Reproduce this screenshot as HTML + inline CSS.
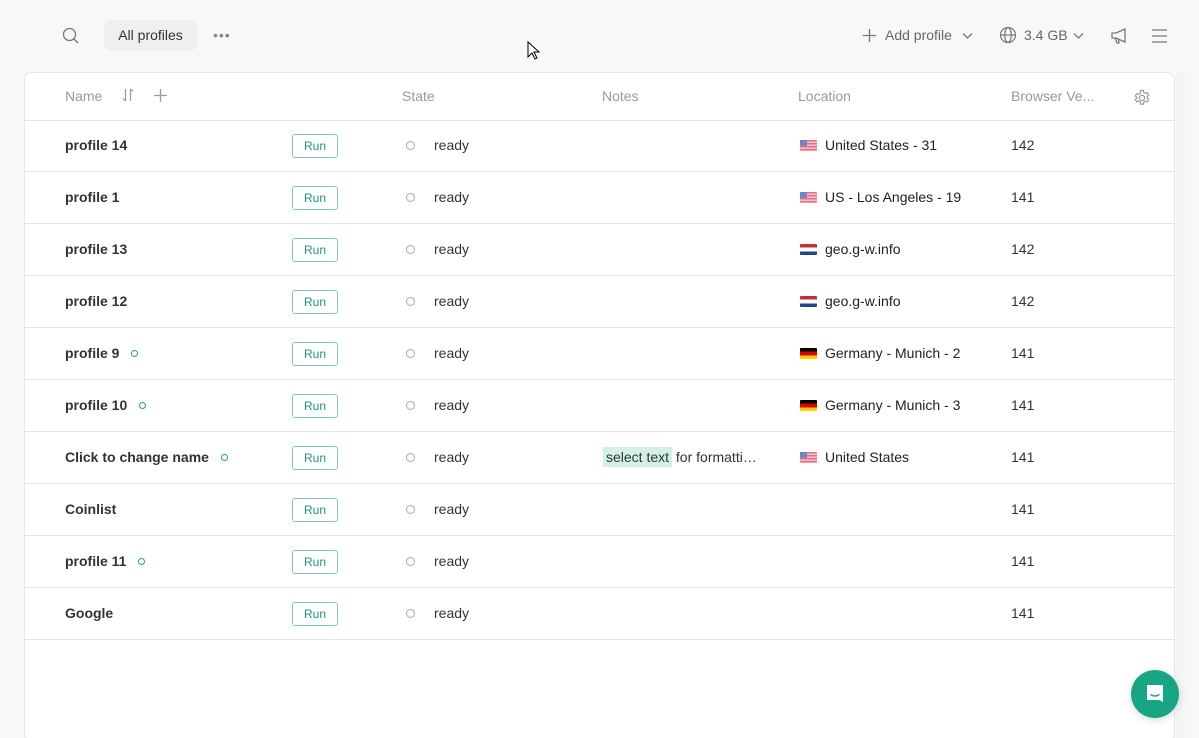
<!DOCTYPE html>
<html><head><meta charset="utf-8"><style>
*{box-sizing:border-box;margin:0;padding:0}
html,body{width:1199px;height:738px;overflow:hidden}
body{background:#f8f8f8;font-family:"Liberation Sans",sans-serif;position:relative;color:#222}
.ab{position:absolute}
.pill{left:104px;top:20px;width:93px;height:31px;background:#efefef;border-radius:8px;font-size:14px;color:#333;line-height:31px;text-align:center}
.tb{font-size:14px;color:#666;top:27px}
.card{position:absolute;left:24px;top:72px;width:1151px;height:670px;background:#fff;border:1px solid #e6e6e6;border-radius:8px}
.hd{position:absolute;top:0;left:0;right:0;height:48px;border-bottom:1px solid #e4e4e4;font-size:14px;color:#999}
.hd span{position:absolute;top:15px}
.row{position:absolute;left:0;right:0;height:52px;border-bottom:1px solid #e4e4e4;font-size:14px}
.row>*{position:absolute}
.nm{left:40px;top:17px;font-weight:bold;color:#333}
.nm i{display:inline-block;width:7px;height:7px;border:1.3px solid #1fa386;border-radius:50%;margin-left:12px;vertical-align:1px}
.run{left:267px;top:14px;width:46px;height:24px;border:1px solid #7fcdb8;border-radius:3px;color:#1a9a7a;font-size:12px;text-align:center;line-height:22px}
.dot{left:381px;top:21px;width:9px;height:9px;border:1px solid #aaa;border-radius:50%}
.st{left:409px;top:17px;color:#333}
.loc{left:775px;top:17px;color:#222}
.loc b{display:inline-block;width:17px;height:11px;margin-right:8px;vertical-align:-1px;border-radius:1px}
.us{background:repeating-linear-gradient(#e8706e 0 1.5px,#fbe 1.5px 3px);position:relative}
.us:before{content:"";position:absolute;left:0;top:0;width:7px;height:6px;background:#6f86c4}
.nl{background:linear-gradient(#c0313a 0 33%,#fff 33% 66%,#21468b 66%)}
.de{background:linear-gradient(#000 0 33%,#dd0000 33% 66%,#ffce00 66%)}
.bv{left:986px;top:17px;color:#333}
</style></head><body>
<svg class="ab" style="left:62px;top:27px" width="18" height="18" viewBox="0 0 18 18" fill="none" stroke="#777" stroke-width="1.3"><circle cx="7.5" cy="7.5" r="6"/><path d="M12 12l4 4"/></svg>
<div class="ab pill">All profiles</div>
<div class="ab" style="left:213px;top:27px;color:#888;font-size:14px;letter-spacing:1px">•••</div>
<svg class="ab" style="left:527px;top:41px" width="14" height="21" viewBox="0 0 14 21"><path d="M1 1v15l4-4 3 6 2-1-3-6h5z" fill="#fff" stroke="#000"/></svg>
<svg class="ab" style="left:862px;top:28px" width="15" height="15" stroke="#777" stroke-width="1.3"><path d="M7.5 1v13M1 7.5h13"/></svg>
<div class="ab tb" style="left:885px">Add profile</div>
<svg class="ab" style="left:962px;top:32px" width="11" height="8" fill="none" stroke="#777" stroke-width="1.3"><path d="M1 1.5l4.5 4.5 4.5-4.5"/></svg>
<svg class="ab" style="left:999px;top:26px" width="18" height="18" fill="none" stroke="#777" stroke-width="1.2"><circle cx="9" cy="9" r="7.5"/><ellipse cx="9" cy="9" rx="3.3" ry="7.5"/><path d="M1.5 9h15"/></svg>
<div class="ab tb" style="left:1024px">3.4 GB</div>
<svg class="ab" style="left:1073px;top:32px" width="11" height="8" fill="none" stroke="#777" stroke-width="1.3"><path d="M1 1.5l4.5 4.5 4.5-4.5"/></svg>
<svg class="ab" style="left:1110px;top:27px" width="18" height="18" fill="none" stroke="#777" stroke-width="1.3"><path d="M2 6h4l9-4v13l-9-4H2zM5 11l2 5h2l-1-5"/></svg>
<svg class="ab" style="left:1151px;top:28px" width="17" height="16" stroke="#777" stroke-width="1.3"><path d="M1 2h15M1 8h15M1 14h15"/></svg>
<div class="ab" style="left:1176px;top:72px;width:23px;height:666px;background:linear-gradient(90deg,#f3f3f3,#fafafa)"></div>
<div class="card">
<div class="hd"><span style="left:40px">Name</span>
<svg class="ab" style="left:97px;top:15px" width="12" height="14" stroke="#999" stroke-width="1.2" fill="none"><path d="M3.5 1v12M1 10.5l2.5 2.5M8.5 13V1M11 3.5L8.5 1"/></svg>
<svg class="ab" style="left:128px;top:15px" width="15" height="15" stroke="#999" stroke-width="1.3"><path d="M7.5 1v13M1 7.5h13"/></svg>
<span style="left:377px">State</span><span style="left:577px">Notes</span><span style="left:773px">Location</span><span style="left:986px">Browser Ve...</span>
<svg class="ab" style="left:1108px;top:16px" width="18" height="18" fill="none" stroke="#999" stroke-width="1.2"><circle cx="9" cy="9" r="2.6"/><path d="M7.6 1.5h2.8l.4 2 1.6.9 1.9-.7 1.4 2.4-1.5 1.3v1.8l1.5 1.3-1.4 2.4-1.9-.7-1.6.9-.4 2H7.6l-.4-2-1.6-.9-1.9.7-1.4-2.4 1.5-1.3V8.3L2.3 7l1.4-2.4 1.9.7 1.6-.9z"/></svg>
</div>
<div class="row" style="top:47px"><div class="nm">profile 14</div><div class="run">Run</div><div class="dot"></div><div class="st">ready</div><div class="loc"><b class="us"></b>United States - 31</div><div class="bv">142</div></div>
<div class="row" style="top:99px"><div class="nm">profile 1</div><div class="run">Run</div><div class="dot"></div><div class="st">ready</div><div class="loc"><b class="us"></b>US - Los Angeles - 19</div><div class="bv">141</div></div>
<div class="row" style="top:151px"><div class="nm">profile 13</div><div class="run">Run</div><div class="dot"></div><div class="st">ready</div><div class="loc"><b class="nl"></b>geo.g-w.info</div><div class="bv">142</div></div>
<div class="row" style="top:203px"><div class="nm">profile 12</div><div class="run">Run</div><div class="dot"></div><div class="st">ready</div><div class="loc"><b class="nl"></b>geo.g-w.info</div><div class="bv">142</div></div>
<div class="row" style="top:255px"><div class="nm">profile 9<i></i></div><div class="run">Run</div><div class="dot"></div><div class="st">ready</div><div class="loc"><b class="de"></b>Germany - Munich - 2</div><div class="bv">141</div></div>
<div class="row" style="top:307px"><div class="nm">profile 10<i></i></div><div class="run">Run</div><div class="dot"></div><div class="st">ready</div><div class="loc"><b class="de"></b>Germany - Munich - 3</div><div class="bv">141</div></div>
<div class="row" style="top:359px"><div class="nm">Click to change name<i></i></div><div class="run">Run</div><div class="dot"></div><div class="st">ready</div><div style="left:578px;top:17px;color:#333"><span style="background:#d3f0e8;padding:2px 3px">select text</span> for formatti…</div><div class="loc"><b class="us"></b>United States</div><div class="bv">141</div></div>
<div class="row" style="top:411px"><div class="nm">Coinlist</div><div class="run">Run</div><div class="dot"></div><div class="st">ready</div><div class="bv">141</div></div>
<div class="row" style="top:463px"><div class="nm">profile 11<i></i></div><div class="run">Run</div><div class="dot"></div><div class="st">ready</div><div class="bv">141</div></div>
<div class="row" style="top:515px"><div class="nm">Google</div><div class="run">Run</div><div class="dot"></div><div class="st">ready</div><div class="bv">141</div></div>
</div>
<div class="ab" style="left:1131px;top:670px;width:48px;height:48px;border-radius:50%;background:#17a584;box-shadow:0 2px 8px rgba(0,0,0,.15)"></div>
<svg class="ab" style="left:1143px;top:682px" width="24" height="24"><path d="M4 3h16v17l-4-2H4z" fill="#fff"/><path d="M7.5 12.5q4.5 3 9 0" stroke="#17a584" stroke-width="1.5" fill="none"/></svg>
</body></html>
